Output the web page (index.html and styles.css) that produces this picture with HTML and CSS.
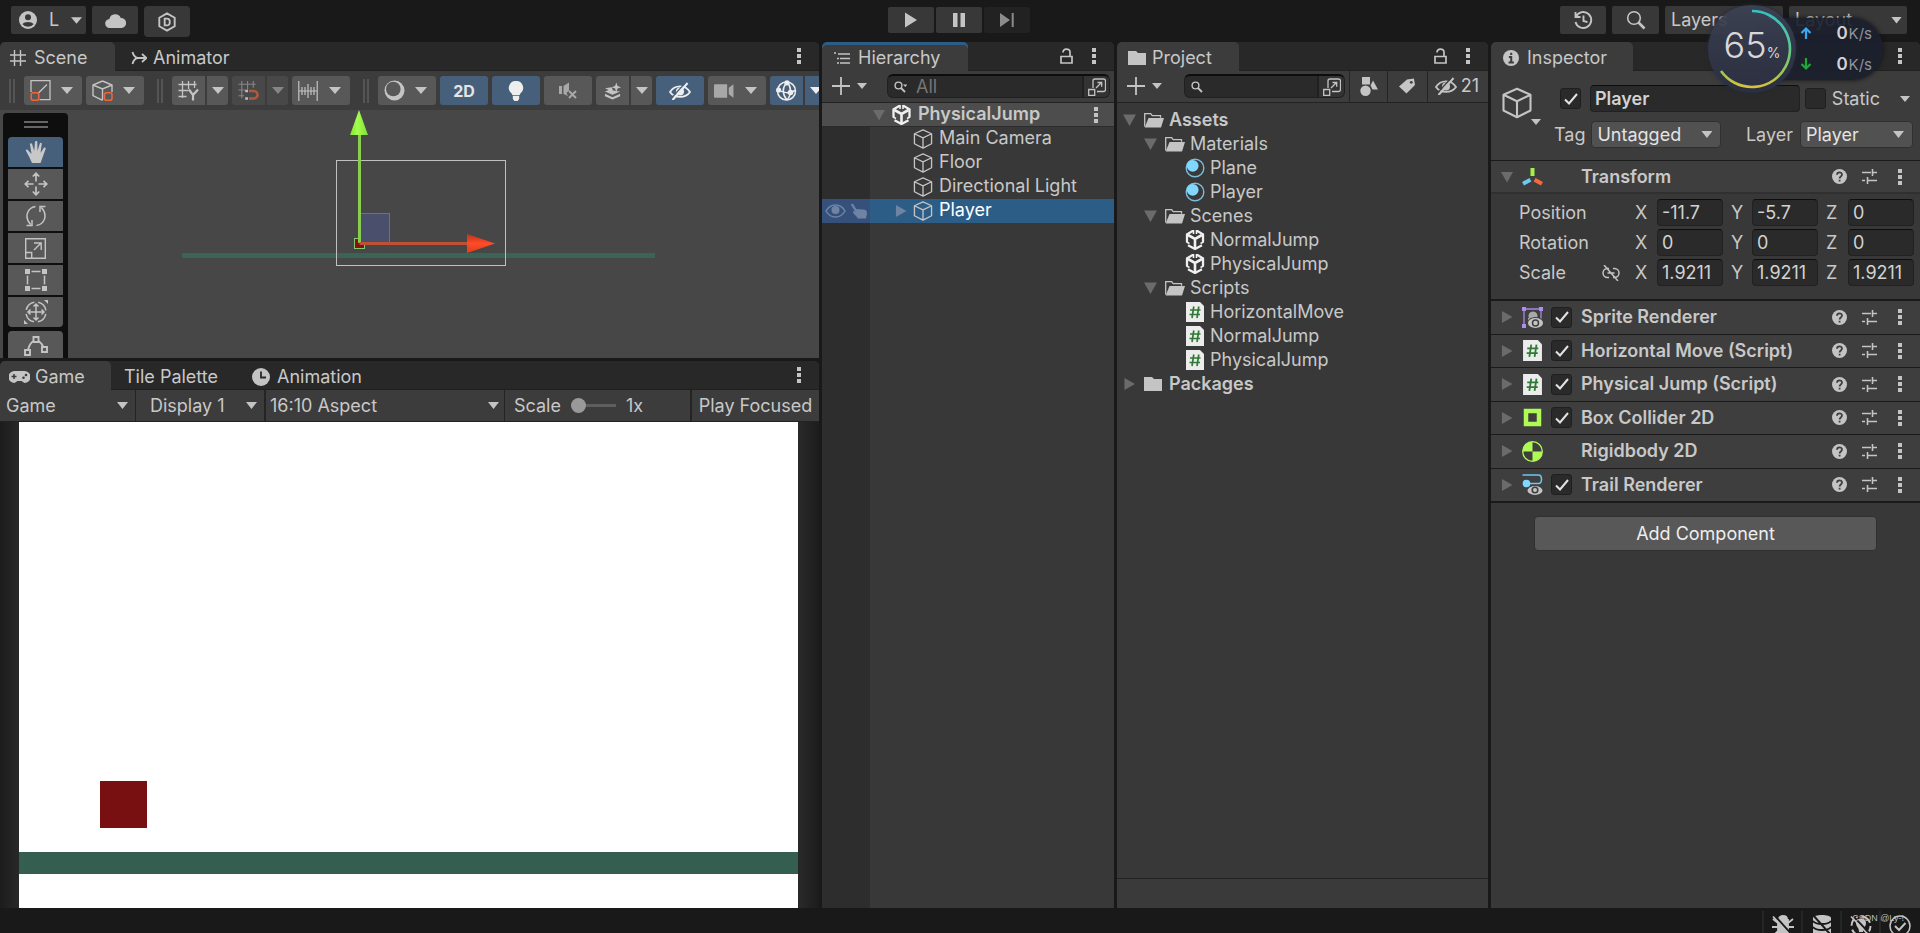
FILE: index.html
```html
<!DOCTYPE html>
<html lang="en">
<head>
<meta charset="utf-8">
<title>PhysicalJump - Editor</title>
<link rel="stylesheet" href="styles.css">
</head>
<body>
<svg class="defs" aria-hidden="true">
  <symbol id="i-user" viewBox="0 0 18 18"><circle cx="9" cy="9" r="9" fill="currentColor"/><circle cx="9" cy="6.2" r="3" fill="#383838"/><path d="M3.500 13.200c1.400-3 9.600-3 11 0a7 7 0 0 1-11 0z" fill="#383838"/></symbol>
  <symbol id="i-cloud" viewBox="0 0 21 15"><path d="M5 15a4.500 4.500 0 0 1-.6-9A6 6 0 0 1 15.800 5 5 5 0 0 1 16.500 15z" fill="currentColor"/></symbol>
  <symbol id="i-hexd" viewBox="0 0 18 19"><path d="M9 1.300l7.300 4.100v8.200L9 17.700l-7.300-4.100V5.400z M6.800 6.300v6.400h2.200a2.600 2.600 0 0 0 2.600-2.600v-1.200A2.600 2.600 0 0 0 9 6.300z" fill="none" stroke="currentColor" stroke-width="1.800"/></symbol>
  <symbol id="i-history" viewBox="0 0 20 20"><path d="M3.200 6.200A8 8 0 1 1 2.500 12M2.500 2v5h5M10.500 5.500v5.500l4 1.200" fill="none" stroke="currentColor" stroke-width="1.900"/></symbol>
  <symbol id="i-search" viewBox="0 0 20 20"><circle cx="8" cy="8" r="6.300" fill="none" stroke="currentColor" stroke-width="1.600"/><path d="M12.500 12.500l6 6" stroke="currentColor" stroke-width="2.600"/></symbol>
  <symbol id="i-play" viewBox="0 0 14 16"><path d="M1 .5l12 7.500-12 7.500z" fill="currentColor"/></symbol>
  <symbol id="i-pause" viewBox="0 0 14 16"><path d="M1 1h4.500v14H1zM8.500 1H13v14H8.500z" fill="currentColor"/></symbol>
  <symbol id="i-step" viewBox="0 0 16 16"><path d="M1 1l10 7-10 7zM12.700 1h2v14h-2z" fill="currentColor"/></symbol>
  <symbol id="i-grid" viewBox="0 0 16 16"><path d="M4.500 0v16M10.500 0v16M0 5h16M0 11h16" stroke="currentColor" stroke-width="1.400"/></symbol>
  <symbol id="i-animator" viewBox="0 0 16 14"><path d="M1.500 1c1 4 3 5.800 6 6M1.500 13c1-4 3-6 6-6H14" fill="none" stroke="currentColor" stroke-width="1.800"/><path d="M11 3l4.500 4-4.500 4" fill="none" stroke="currentColor" stroke-width="1.800"/></symbol>
  <symbol id="i-dots" viewBox="0 0 4 16"><path d="M0 0h4v4H0zM0 6h4v4H0zM0 12h4v4H0z" fill="currentColor"/></symbol>
  <symbol id="i-tri" viewBox="0 0 12 7"><path d="M0 0h12L6 7z" fill="currentColor"/></symbol>
  <symbol id="i-down" viewBox="0 0 13 12"><path d="M0 .5h13L6.500 12z" fill="currentColor"/></symbol>
  <symbol id="i-right" viewBox="0 0 13 13"><path d="M1 0l11.500 6.500L1 13z" fill="currentColor"/></symbol>
  <symbol id="i-pivot" viewBox="0 0 20 21"><path d="M.5 12V.7h19v19H9M8 13l8.500-8.500" fill="none" stroke="currentColor" stroke-width="1.300"/><rect x=".7" y="12.700" width="7.500" height="7.500" rx="2" fill="none" stroke="#f06437" stroke-width="1.600"/></symbol>
  <symbol id="i-cubeo" viewBox="0 0 21 21"><path d="M10.500 1L1 5v10.500l9.500 4.800M10.500 1L20 5v7M1 5l9.500 4L20 5M10.500 9v11" fill="none" stroke="currentColor" stroke-width="1.400"/><rect x="12.500" y="12.700" width="7.500" height="7.500" rx="2" fill="none" stroke="#f06437" stroke-width="1.600"/></symbol>
  <symbol id="i-gridy" viewBox="0 0 20 21"><path d="M4 1v17M10 1v8M16 1v7M0 4.500h18M0 10.500h10M0 16.500h8" fill="none" stroke="currentColor" stroke-width="1.300"/><path d="M10.500 9.500l4 5.500v5.500M19.500 9.500l-5 5.500" fill="none" stroke="currentColor" stroke-width="2.200"/></symbol>
  <symbol id="i-snap" viewBox="0 0 21 22"><path d="M3.500 1v18M9.500 1v9M15.500 1v7M0 4.500h18M0 10.500h7M0 16.500h6" fill="none" stroke="currentColor" stroke-width="1.200"/><path d="M11 11.500h5a4 4 0 0 1 0 8h-5" fill="none" stroke="#b05a3c" stroke-width="2.600"/><path d="M7 10.200h3v2.600H7zM7 18.200h3v2.600H7z" fill="#bbb"/></symbol>
  <symbol id="i-ruler" viewBox="0 0 20 20"><path d="M.8 0v20M19.200 0v20M1 10h18M4 6v8M7 6v8M10 3v14M13 6v8M16 6v8" stroke="currentColor" stroke-width="1.200"/></symbol>
  <symbol id="i-shade" viewBox="0 0 21 21"><circle cx="10.500" cy="10.500" r="10" fill="currentColor"/><circle cx="9.300" cy="9" r="7.300" fill="#585858"/></symbol>
  <symbol id="i-bulb" viewBox="0 0 14 19"><path d="M7 0a6.600 6.600 0 0 1 4 12l-.5 1.200h-7L3 12A6.600 6.600 0 0 1 7 0zM4 14h6v3l-1.500 2h-3L4 17z" fill="currentColor"/></symbol>
  <symbol id="i-mute" viewBox="0 0 18 18"><path d="M0 4h3v8H0zM4.500 4L10 .5v8L7.500 11 9 14l-4.500-2z" fill="currentColor"/><path d="M10 9l7 7M17 9l-7 7" stroke="currentColor" stroke-width="2"/></symbol>
  <symbol id="i-fx" viewBox="0 0 19 18"><path d="M1 6l7-1 1.500 3.500L17 9.500 9 13 1 9.500 5 8z M1 12l8 3.500L17 12v2.500L9 18l-8-3.500zM13 0l1.300 3.700L18 5l-3.700 1.300L13 10l-1.300-3.700L8 5l3.700-1.300z" fill="currentColor"/></symbol>
  <symbol id="i-eyeoff" viewBox="0 0 22 18"><path d="M1 10c4.500-7.500 15.500-7.500 20 0-4.500 6.500-15.500 6.500-20 0z" fill="none" stroke="currentColor" stroke-width="1.800"/><circle cx="11" cy="9.500" r="4" fill="currentColor"/><path d="M3.500 18L18.500 1" stroke="currentColor" stroke-width="2.200"/><path d="M2 16.500L17 0" stroke="var(--bg,#3c3c3c)" stroke-width="1.200"/></symbol>
  <symbol id="i-cam" viewBox="0 0 19 14"><path d="M1 .5h11.500v13H1a1 1 0 0 1-1-1v-11a1 1 0 0 1 1-1zM14 4l4.500-3.500v13L14 10z" fill="currentColor"/></symbol>
  <symbol id="i-gizmo" viewBox="0 0 21 21"><g fill="none" stroke="currentColor" stroke-width="1.500"><circle cx="10.500" cy="11" r="9"/><path d="M11 2C6 8 6 14 11 20M11 2c4.500 5 5 12 0 18M2 9.500c5 4 12 4 17 1"/></g><circle cx="11" cy="2.800" r="2.600" fill="currentColor"/><circle cx="2.600" cy="10" r="2.600" fill="currentColor"/><circle cx="14.500" cy="12.500" r="2.800" fill="currentColor"/></symbol>
  <symbol id="i-hand" viewBox="0 0 21 22"><path d="M6.500 22L4 16.500 .3 9.500C.5 8 2 8.300 2.600 9.300L6 13 4.500 3.500C4.500 1.800 6.300 1.800 6.700 3.300L8.700 10 9.500 1c.3-1.400 2.100-1.400 2.300 0L12 10 14.300 2.500c.5-1.300 2.200-1 2 .6L15 12l3.200-5c.9-1 2.400-.3 1.900 1L16.500 18 15 22z" fill="currentColor"/></symbol>
  <symbol id="i-move" viewBox="0 0 24 24"><g fill="none" stroke="currentColor" stroke-width="1.700"><path d="M12 9.500V1.500M8.800 4.500L12 1.200l3.200 3.300M12 14.500v8M8.800 19.500l3.200 3.300 3.200-3.300M9.500 12h-8M4.500 8.800L1.200 12l3.300 3.200M14.500 12h8M19.500 8.800l3.300 3.200-3.300 3.200"/></g></symbol>
  <symbol id="i-rotate" viewBox="0 0 22 22"><g fill="none" stroke="currentColor" stroke-width="1.500"><path d="M10.500 1.500C3 2.500-1.500 11.500 5.500 19.500M11.500 20.500C19 19.500 23.500 10.500 16.500 2.500M1.500 20.500H7V15M20.500 1.500H15V7"/></g></symbol>
  <symbol id="i-scale" viewBox="0 0 21 21"><path d="M.7.700h19.600v19.600H.7zM.7 14.500h6v6M9 12l6.500-6.500M9 5h7.200v7" fill="none" stroke="currentColor" stroke-width="1.400"/></symbol>
  <symbol id="i-rect" viewBox="0 0 22 22"><path d="M0 0h5v5H0zM17 0h5v5h-5zM0 17h5v5H0zM17 17h5v5h-5z" fill="currentColor"/><path d="M6.500 2.500h9M6.500 19.500h9M2.500 6.500v9M19.500 6.500v9" stroke="currentColor" stroke-width="1.500"/></symbol>
  <symbol id="i-multi" viewBox="0 0 24 24"><g fill="none" stroke="currentColor" stroke-width="1.500"><path d="M12 4v16M4 12h16M9.500 6.500L12 4l2.500 2.500M9.500 17.500L12 20l2.500-2.500M6.500 9.500L4 12l2.500 2.500M17.500 9.500L20 12l-2.500 2.500"/><circle cx="12" cy="12" r="10" stroke-dasharray="11.700 4" stroke-dashoffset="-2"/></g><path d="M20 0h4v4zM0 20v4h4z" fill="currentColor"/></symbol>
  <symbol id="i-path" viewBox="0 0 24 20"><g fill="none" stroke="currentColor" stroke-width="1.900"><path d="M9.500 1h5v5h-5zM1 14h5v5H1zM18 11h5v5h-5z"/><path d="M9.500 5C6 7 5 10 4 14M14.500 5c3 2 4 4 5 6"/></g></symbol>
  <symbol id="i-pad" viewBox="0 0 21 12"><path d="M5.500 0h10a5.500 5.500 0 0 1 0 12L12.500 10h-4L5.500 12a5.500 5.500 0 0 1 0-12z" fill="currentColor"/><path d="M2.500 5.500h5M5 3v5" stroke="#3c3c3c" stroke-width="1.500"/><circle cx="17" cy="4" r="1.300" fill="#3c3c3c"/><circle cx="14.500" cy="6.800" r="1.300" fill="#3c3c3c"/></symbol>
  <symbol id="i-clock" viewBox="0 0 18 18"><circle cx="9" cy="9" r="9" fill="currentColor"/><path d="M9 3.500V9.500h5" fill="none" stroke="#282828" stroke-width="1.800"/></symbol>
  <symbol id="i-list" viewBox="0 0 16 13"><path d="M0 1h2M4 2h12M3 6.500h2M6 6.500h10M3 11h2M6 11h10" stroke="currentColor" stroke-width="1.500"/></symbol>
  <symbol id="i-lock" viewBox="0 0 13 16"><path d="M1 8.500h11v6.500H1zM3 4.500C3 0 10 0 10 4v4.500" fill="none" stroke="currentColor" stroke-width="1.700"/></symbol>
  <symbol id="i-plus" viewBox="0 0 18 18"><path d="M9 0v18M0 9h18" stroke="currentColor" stroke-width="1.800"/></symbol>
  <symbol id="i-mag" viewBox="0 0 13 12"><circle cx="4.500" cy="4.500" r="3.400" fill="none" stroke="currentColor" stroke-width="1.400"/><path d="M7 7l4 4" stroke="currentColor" stroke-width="1.800"/></symbol>
  <symbol id="i-magd" viewBox="0 0 13 12"><circle cx="4.500" cy="4.500" r="3.400" fill="none" stroke="currentColor" stroke-width="1.400"/><path d="M7 7l4 4" stroke="currentColor" stroke-width="1.800"/><path d="M9 3.500h4.500L11.200 6z" fill="currentColor"/></symbol>
  <symbol id="i-expand" viewBox="0 0 18 18"><path d="M5 10V3a2 2 0 0 1 2-2h8.500a2 2 0 0 1 2 2v8.500a2 2 0 0 1-2 2H9M.7 11.500h6v6h-6zM8 10l6-6M9.500 4.500h4.200v4.200" fill="none" stroke="currentColor" stroke-width="1.300"/></symbol>
  <symbol id="i-unity" viewBox="0 0 18 20"><path d="M7.500 .5L1 4.300v7.900M10.500 .5L17 4.300v7.900M2 15.300l7 3.700 7-3.700" fill="none" stroke="#f0f0f0" stroke-width="2.300"/><path d="M2 5l7 4 7-4M9 9v9" fill="none" stroke="#f0f0f0" stroke-width="2.600"/><path d="M7.500 0v4M10.500 0v4M.5 12l3 1.500M17.500 12l-3 1.500" fill="none" stroke="#f0f0f0" stroke-width="1.600"/></symbol>
  <symbol id="i-cube" viewBox="0 0 20 21"><path d="M10 1L1 5v10.500l9 4.500 9-4.500V5zM1 5l9 4.300L19 5M10 9.300V20" fill="none" stroke="currentColor" stroke-width="1.400" stroke-linejoin="round"/></symbol>
  <symbol id="i-eye" viewBox="0 0 21 14"><path d="M1 7c4.500-8 14.500-8 19 0-4.500 8-14.500 8-19 0z" fill="none" stroke="currentColor" stroke-width="1.500"/><circle cx="10.500" cy="6" r="4" fill="currentColor"/></symbol>
  <symbol id="i-point" viewBox="0 0 17 16"><path d="M0 1.500C0-.5 2.500 0 3 1.500L5.500 6l7 .5c3 0 4.500 1 4.500 4 0 2-1 3.500-1 5.500H7c0-2-3.500-4-5-6.500 0-2 2-1.500 3 0z" fill="currentColor"/></symbol>
  <symbol id="i-open" viewBox="0 0 20 15"><path d="M.7 13.500V.7h6l1.500 2h8.300v2" fill="none" stroke="currentColor" stroke-width="1.300"/><path d="M4.500 5H20l-3 9.500H.7z" fill="currentColor"/></symbol>
  <symbol id="i-folder" viewBox="0 0 18 14"><path d="M0 0h8l2 2h8v12H0z" fill="currentColor"/></symbol>
  <symbol id="i-mat" viewBox="0 0 20 20"><circle cx="10" cy="10" r="8.800" fill="none" stroke="#7bbcdc" stroke-width="1.400"/><circle cx="7.700" cy="7.800" r="5.900" fill="#80d8ff"/></symbol>
  <symbol id="i-cs" viewBox="0 0 18 20"><path d="M0 0h14l4 4v16H0z" fill="#ececec"/><path d="M7.800 4.500L6 16M12.800 4.500L11 16M4 8h10.500M3.500 12.500H14" stroke="#2f7a35" stroke-width="1.700"/></symbol>
  <symbol id="i-shapes" viewBox="0 0 18 19"><path d="M2 0h8v7.500H2zM13 3.500l5 9h-5.500l-2-4z" fill="currentColor"/><circle cx="5.500" cy="13.700" r="5.200" fill="currentColor"/></symbol>
  <symbol id="i-tag" viewBox="0 0 15 14"><path d="M0 7.500L7.500 1 14 0l1 6L7 14z" fill="currentColor"/><circle cx="11.500" cy="3.500" r="1.300" fill="#3c3c3c"/></symbol>
  <symbol id="i-info" viewBox="0 0 15 15"><circle cx="7.500" cy="7.500" r="7.500" fill="currentColor"/><path d="M7.700 2.500v2.300M5.500 6.500h2.200v5M5.200 11.700h5" fill="none" stroke="#3c3c3c" stroke-width="1.900"/></symbol>
  <symbol id="i-xform" viewBox="0 0 20 18"><g stroke-width="3.800"><path d="M10 1v7.500" stroke="#a4f04a"/><path d="M8 12l-7 4" stroke="#6cc8f0"/><path d="M12 12l7 4" stroke="#f56a3c"/></g></symbol>
  <symbol id="i-help" viewBox="0 0 15 15"><circle cx="7.500" cy="7.500" r="7.500" fill="currentColor"/><path d="M5 5.800C5 2.600 10 2.600 10 5.600 10 7.500 7.600 7.500 7.600 9.500M7.600 10.800v1.800" fill="none" stroke="#3e3e3e" stroke-width="1.800"/></symbol>
  <symbol id="i-preset" viewBox="0 0 15 15"><path d="M0 3.500h9M10.500 0v7M10.500 3.500H15M0 11.500h3M5.500 8v7M5.500 11.500H15" stroke="currentColor" stroke-width="1.600"/></symbol>
  <symbol id="i-link" viewBox="0 0 18 16"><path d="M7 3.500H5.500a4.500 4.500 0 0 0 0 9H7M11 3.500h1.500a4.500 4.500 0 0 1 0 9H11M5.500 8h7M2 0l14 16" fill="none" stroke="currentColor" stroke-width="1.500"/></symbol>
  <symbol id="i-check" viewBox="0 0 14 12"><path d="M1 6.500l4 4L13 1" fill="none" stroke="currentColor" stroke-width="2"/></symbol>
  <symbol id="i-sprite" viewBox="0 0 21 21"><path d="M2 2h17M2 2v17M19 2v10" fill="none" stroke="#a58ae0" stroke-width="1.300"/><path d="M0 0h4v4H0zM17 0h4v4h-4zM0 17h4v4H0z" fill="#b08cf0"/><path d="M6 16V11h1a4.500 4.500 0 1 1 8 0z" fill="#a8a8a8"/><ellipse cx="13.500" cy="16" rx="8.500" ry="6" fill="#3e3e3e"/><ellipse cx="13.500" cy="16" rx="7.500" ry="5" fill="#c4c4c4"/><circle cx="13.500" cy="16" r="3" fill="none" stroke="#3e3e3e" stroke-width="1.500"/></symbol>
  <symbol id="i-box" viewBox="0 0 21 21"><path d="M4 4h13v13H4z" fill="none" stroke="#b0fa55" stroke-width="4.500"/></symbol>
  <symbol id="i-rigid" viewBox="0 0 21 21"><circle cx="10.500" cy="10.500" r="9.800" fill="none" stroke="#b0fa55" stroke-width="1.300"/><path d="M10.500 10.500V.7a9.800 9.800 0 0 0-9.800 9.800zM10.500 10.500v9.800a9.800 9.800 0 0 0 9.800-9.800z" fill="#b0fa55"/></symbol>
  <symbol id="i-trail" viewBox="0 0 20 21"><path d="M0 1h16c4 0 4 8.500 0 8.500H5" fill="none" stroke="#6cc8f0" stroke-width="1.500"/><circle cx="4" cy="9.500" r="3.800" fill="#80d8ff"/><ellipse cx="12.500" cy="16.500" rx="7.500" ry="4.400" fill="#c4c4c4"/><circle cx="12.500" cy="16" r="2.800" fill="none" stroke="#3e3e3e" stroke-width="1.600"/></symbol>
  <symbol id="i-bug" viewBox="0 0 22 22"><path d="M6 5h10v14l-5 3-5-3zM7 4c0-4 8-4 8 0zM1 4l5 4M21 4l-5 4M0 12h22M2 20l4-4M20 20l-4-4" fill="currentColor" stroke="currentColor" stroke-width="1.800"/><path d="M3 1l18 20" stroke="#191919" stroke-width="2"/><path d="M1 1.500l18 20" stroke="currentColor" stroke-width="1.800"/></symbol>
  <symbol id="i-db" viewBox="0 0 20 22"><path d="M1 3c0-4 18-4 18 0v16c0 4-18 4-18 0z" fill="currentColor"/><path d="M1 6c3 4 15 4 18 0M1 12c3 4 15 4 18 0M1 0l17 19" fill="none" stroke="#191919" stroke-width="2"/></symbol>
  <symbol id="i-lamp" viewBox="0 0 22 22"><circle cx="11" cy="11" r="9.500" fill="none" stroke="currentColor" stroke-width="2" stroke-dasharray="11 4"/><path d="M6 8c0-6 10-6 10 0 0 4-3 4-3 9H9c0-5-3-5-3-9z" fill="currentColor"/><path d="M3 1l18 19" stroke="#191919" stroke-width="2"/><path d="M1 1.500l18 19" stroke="currentColor" stroke-width="1.600"/></symbol>
  <symbol id="i-ok" viewBox="0 0 22 22"><circle cx="11" cy="11" r="10" fill="none" stroke="currentColor" stroke-width="1.500"/><path d="M6 11l4 4 6.500-7" fill="none" stroke="currentColor" stroke-width="2"/></symbol>
</svg>

<div class="app">
  <header class="topbar">
    <div class="top-left">
      <button class="top-btn account" aria-label="Account"><svg class="s18"><use href="#i-user"/></svg><span>L</span><svg class="tri"><use href="#i-tri"/></svg></button>
      <button class="top-btn" aria-label="Cloud"><svg class="w21 h15"><use href="#i-cloud"/></svg></button>
      <button class="top-btn tall" aria-label="DevOps"><svg class="s20"><use href="#i-hexd"/></svg></button>
    </div>
    <div class="transport">
      <button class="top-btn" aria-label="Play"><svg class="s16"><use href="#i-play"/></svg></button>
      <button class="top-btn" aria-label="Pause"><svg class="s16"><use href="#i-pause"/></svg></button>
      <button class="top-btn off" aria-label="Step"><svg class="s16"><use href="#i-step"/></svg></button>
    </div>
    <div class="top-right">
      <button class="top-btn" aria-label="History"><svg class="s20"><use href="#i-history"/></svg></button>
      <button class="top-btn seek" aria-label="Search"><svg class="s20"><use href="#i-search"/></svg></button>
      <div class="drop top-drop"><select aria-label="Layers"><option>Layers</option></select></div>
      <div class="drop top-drop"><select aria-label="Layout"><option>Layout</option></select></div>
    </div>
    <div class="meter">
      <div class="rates">
        <div class="rate"><svg class="s12 up" viewBox="0 0 12 12"><path d="M6 12V2M1.500 6L6 1.500 10.500 6" fill="none" stroke="currentColor" stroke-width="2.200"/></svg><span><b>0</b>K/s</span></div>
        <div class="rate"><svg class="s12 dn" viewBox="0 0 12 12"><path d="M6 0v10M1.500 6L6 10.500 10.500 6" fill="none" stroke="currentColor" stroke-width="2.200"/></svg><span><b>0</b>K/s</span></div>
      </div>
      <div class="dial">
        <svg class="arc" viewBox="0 0 88 88"><defs><linearGradient id="arcg" x1="0" y1="0" x2="0" y2="1"><stop offset="0" stop-color="#35c0c4"/><stop offset=".5" stop-color="#62c890"/><stop offset=".8" stop-color="#9cc850"/><stop offset="1" stop-color="#d8c040"/></linearGradient></defs><path d="M44 6A38 38 0 1 1 13 66" fill="none" stroke="url(#arcg)" stroke-width="2.600"/></svg>
        <span class="pct">65<small>%</small></span>
      </div>
    </div>
  </header>

  <main class="docks">
    <div class="left">
      <section class="pane scene-pane">
        <div class="tabs">
          <button class="tab on tab-scene"><svg class="s16"><use href="#i-grid"/></svg>Scene</button>
          <button class="tab tab-anim"><svg class="s16"><use href="#i-animator"/></svg>Animator</button>
          <button class="more" aria-label="Scene menu"><svg class="dots"><use href="#i-dots"/></svg></button>
        </div>
        <div class="tools">
          <i class="grip"></i>
          <button class="tb wide" aria-label="Pivot"><svg class="s21"><use href="#i-pivot"/></svg><svg class="tri"><use href="#i-tri"/></svg></button>
          <button class="tb wide" aria-label="Local"><svg class="s21"><use href="#i-cubeo"/></svg><svg class="tri"><use href="#i-tri"/></svg></button>
          <i class="grip"></i>
          <div class="split"><button class="tb" aria-label="Grid"><svg class="s21"><use href="#i-gridy"/></svg></button><button class="tb" aria-label="Grid options"><svg class="tri"><use href="#i-tri"/></svg></button></div>
          <div class="split dim"><button class="tb" disabled aria-label="Snap"><svg class="s21"><use href="#i-snap"/></svg></button><button class="tb" disabled aria-label="Snap options"><svg class="tri"><use href="#i-tri"/></svg></button></div>
          <button class="tb wide" aria-label="Increment"><svg class="s20"><use href="#i-ruler"/></svg><svg class="tri"><use href="#i-tri"/></svg></button>
          <i class="grip"></i>
          <button class="tb wide" aria-label="Draw mode"><svg class="s21"><use href="#i-shade"/></svg><svg class="tri"><use href="#i-tri"/></svg></button>
          <button class="tb mid blue two">2D</button>
          <button class="tb mid blue" aria-label="Lighting"><svg class="s20"><use href="#i-bulb"/></svg></button>
          <button class="tb mid grey" aria-label="Audio"><svg class="s18"><use href="#i-mute"/></svg></button>
          <div class="split"><button class="tb" aria-label="Effects"><svg class="s18"><use href="#i-fx"/></svg></button><button class="tb" aria-label="Effects options"><svg class="tri"><use href="#i-tri"/></svg></button></div>
          <button class="tb mid blue eye" aria-label="Visibility"><svg class="w22 h18"><use href="#i-eyeoff"/></svg></button>
          <button class="tb wide grey" aria-label="Camera"><svg class="s20"><use href="#i-cam"/></svg><svg class="tri"><use href="#i-tri"/></svg></button>
          <div class="split"><button class="tb blue" aria-label="Gizmos"><svg class="s21"><use href="#i-gizmo"/></svg></button><button class="tb blue" aria-label="Gizmo options"><svg class="tri"><use href="#i-tri"/></svg></button></div>
        </div>
        <div class="scene">
          <svg class="world" aria-hidden="true">
            <defs><linearGradient id="cg"><stop offset="0" stop-color="#7fe032"/><stop offset=".4" stop-color="#a6ff4c"/><stop offset="1" stop-color="#7ede38"/></linearGradient><linearGradient id="cr" x2="0" y2="1"><stop offset="0" stop-color="#c03218"/><stop offset=".5" stop-color="#ff4c28"/><stop offset="1" stop-color="#e03c1c"/></linearGradient></defs>
            <rect x="182" y="143" width="473" height="5" fill="#3a6455"/>
            <rect x="336.500" y="50.500" width="169" height="105" fill="none" stroke="#c0c0c0"/>
            <rect x="354.500" y="128.500" width="10" height="10" fill="#871010" stroke="#86c878"/>
            <rect x="360.500" y="103.500" width="29" height="30" fill="#4a506b" stroke="#4c74cc"/>
            <path d="M359.500 24v109" stroke="#8ace4e" stroke-width="3"/>
            <path d="M359.500 133.500H468" stroke="#c05034" stroke-width="3"/>
            <path d="M359 0l9 25h-18z" fill="url(#cg)"/>
            <path d="M467 124l28 9.500-28 9.500z" fill="url(#cr)"/>
          </svg>
          <div class="palette">
            <i class="pgrip"></i>
            <button class="tb blue" aria-label="Hand"><svg class="s22"><use href="#i-hand"/></svg></button>
            <button class="tb" aria-label="Move"><svg class="s24"><use href="#i-move"/></svg></button>
            <button class="tb" aria-label="Rotate"><svg class="s22"><use href="#i-rotate"/></svg></button>
            <button class="tb" aria-label="Scale"><svg class="s21"><use href="#i-scale"/></svg></button>
            <button class="tb" aria-label="Rect"><svg class="s22"><use href="#i-rect"/></svg></button>
            <button class="tb last" aria-label="Transform"><svg class="s24"><use href="#i-multi"/></svg></button>
            <button class="tb extra" aria-label="Edit collider"><svg class="s24"><use href="#i-path"/></svg></button>
          </div>
        </div>
      </section>

      <section class="pane game-pane">
        <div class="tabs">
          <button class="tab on tab-game"><svg class="w21 h12"><use href="#i-pad"/></svg>Game</button>
          <button class="tab tab-tile">Tile Palette</button>
          <button class="tab tab-ani"><svg class="s18"><use href="#i-clock"/></svg>Animation</button>
          <button class="more" aria-label="Game menu"><svg class="dots"><use href="#i-dots"/></svg></button>
        </div>
        <div class="gbar">
          <div class="drop g1"><select aria-label="View"><option>Game</option></select></div>
          <div class="drop g2"><select aria-label="Display"><option>Display 1</option></select></div>
          <div class="drop g3"><select aria-label="Aspect"><option>16:10 Aspect</option></select></div>
          <label class="g4">Scale<input type="range" min="1" max="5" value="1"><span>1x</span></label>
          <button class="g5">Play Focused</button>
        </div>
        <div class="gview">
          <div class="stage">
            <div class="player"></div>
            <div class="floor"></div>
          </div>
        </div>
      </section>
    </div>

    <section class="pane hier">
      <div class="tabs">
        <button class="tab on focus tab-hier"><svg class="w16 h13"><use href="#i-list"/></svg>Hierarchy</button>
        <span class="grow"></span>
        <button class="lock" aria-label="Lock"><svg class="w13 h16"><use href="#i-lock"/></svg></button>
        <button class="more" aria-label="Hierarchy menu"><svg class="dots"><use href="#i-dots"/></svg></button>
      </div>
      <div class="bar">
        <button class="add" aria-label="Create"><svg class="s18"><use href="#i-plus"/></svg><svg class="tri sm"><use href="#i-tri"/></svg></button>
        <div class="find"><label><svg class="w13 h12"><use href="#i-magd"/></svg><input type="text" aria-label="Search hierarchy" placeholder="All"></label><button aria-label="Open search"><svg class="s18"><use href="#i-expand"/></svg></button></div>
      </div>
      <div class="scene-head"><svg class="fold"><use href="#i-down"/></svg><svg class="w19 h20"><use href="#i-unity"/></svg><b>PhysicalJump</b><svg class="dots"><use href="#i-dots"/></svg></div>
      <ul class="objects">
        <li><span class="gut"></span><svg class="s20"><use href="#i-cube"/></svg><span class="nm">Main Camera</span></li>
        <li><span class="gut"></span><svg class="s20"><use href="#i-cube"/></svg><span class="nm">Floor</span></li>
        <li><span class="gut"></span><svg class="s20"><use href="#i-cube"/></svg><span class="nm">Directional Light</span></li>
        <li class="sel"><span class="gut"><svg class="w21 h14"><use href="#i-eye"/></svg><svg class="s16"><use href="#i-point"/></svg></span><svg class="fold"><use href="#i-right"/></svg><svg class="s20"><use href="#i-cube"/></svg><span class="nm">Player</span></li>
        <li class="rest"><span class="gut"></span></li>
      </ul>
    </section>

    <section class="pane proj">
      <div class="tabs">
        <button class="tab on tab-proj"><svg class="w18 h14"><use href="#i-folder"/></svg>Project</button>
        <span class="grow"></span>
        <button class="lock" aria-label="Lock"><svg class="w13 h16"><use href="#i-lock"/></svg></button>
        <button class="more" aria-label="Project menu"><svg class="dots"><use href="#i-dots"/></svg></button>
      </div>
      <div class="bar">
        <button class="add" aria-label="Create"><svg class="s18"><use href="#i-plus"/></svg><svg class="tri sm"><use href="#i-tri"/></svg></button>
        <div class="find"><label><svg class="w13 h12"><use href="#i-mag"/></svg><input type="text" aria-label="Search project"></label><button aria-label="Open search"><svg class="s18"><use href="#i-expand"/></svg></button></div>
        <button class="filt kind" aria-label="Search by type"><svg class="w18 h19"><use href="#i-shapes"/></svg></button>
        <button class="filt" aria-label="Search by label"><svg class="s16"><use href="#i-tag"/></svg></button>
        <button class="filt hid"><svg class="w22 h18"><use href="#i-eyeoff"/></svg>21</button>
      </div>
      <ul class="tree">
        <li><svg class="fold"><use href="#i-down"/></svg><svg class="w20 h15"><use href="#i-open"/></svg><b>Assets</b></li>
        <li class="l2"><svg class="fold"><use href="#i-down"/></svg><svg class="w20 h15"><use href="#i-open"/></svg>Materials</li>
        <li class="l3"><svg class="s20"><use href="#i-mat"/></svg>Plane</li>
        <li class="l3"><svg class="s20"><use href="#i-mat"/></svg>Player</li>
        <li class="l2"><svg class="fold"><use href="#i-down"/></svg><svg class="w20 h15"><use href="#i-open"/></svg>Scenes</li>
        <li class="l3"><svg class="s20"><use href="#i-unity"/></svg>NormalJump</li>
        <li class="l3"><svg class="s20"><use href="#i-unity"/></svg>PhysicalJump</li>
        <li class="l2"><svg class="fold"><use href="#i-down"/></svg><svg class="w20 h15"><use href="#i-open"/></svg>Scripts</li>
        <li class="l3"><svg class="s20"><use href="#i-cs"/></svg>HorizontalMove</li>
        <li class="l3"><svg class="s20"><use href="#i-cs"/></svg>NormalJump</li>
        <li class="l3"><svg class="s20"><use href="#i-cs"/></svg>PhysicalJump</li>
        <li><svg class="fold"><use href="#i-right"/></svg><svg class="w18 h14 closed"><use href="#i-folder"/></svg><b>Packages</b></li>
      </ul>
      <div class="crumbs"></div>
    </section>

    <section class="pane insp">
      <div class="tabs">
        <button class="tab on tab-insp"><svg class="s16"><use href="#i-info"/></svg>Inspector</button>
        <span class="grow"></span>
        <button class="more" aria-label="Inspector menu"><svg class="dots"><use href="#i-dots"/></svg></button>
      </div>
      <div class="ident">
        <button class="ico" aria-label="Icon"><svg class="big"><use href="#i-cube"/></svg><svg class="tri sm"><use href="#i-tri"/></svg></button>
        <div class="lines">
          <div class="line1">
            <span class="ck"><input type="checkbox" checked aria-label="Active"><svg><use href="#i-check"/></svg></span>
            <input class="field name" type="text" value="Player" aria-label="Name">
            <label class="static"><span class="ck"><input type="checkbox"></span>Static</label>
            <svg class="tri sm"><use href="#i-tri"/></svg>
          </div>
          <div class="line2">
            <label for="tag">Tag</label><div class="drop box dtag"><select id="tag"><option>Untagged</option></select></div>
            <label for="layer" class="lay">Layer</label><div class="drop box dlay"><select id="layer"><option>Player</option></select></div>
          </div>
        </div>
      </div>
      <div class="comp thead"><svg class="fold"><use href="#i-down"/></svg><svg class="s21"><use href="#i-xform"/></svg><span class="ck none"></span><b>Transform</b><svg class="s15"><use href="#i-help"/></svg><svg class="s15"><use href="#i-preset"/></svg><svg class="dots"><use href="#i-dots"/></svg></div>
      <div class="xform">
        <div class="vec"><span>Position</span><label>X<input class="field" type="text" value="-11.7"></label><label>Y<input class="field" type="text" value="-5.7"></label><label>Z<input class="field" type="text" value="0"></label></div>
        <div class="vec"><span>Rotation</span><label>X<input class="field" type="text" value="0"></label><label>Y<input class="field" type="text" value="0"></label><label>Z<input class="field" type="text" value="0"></label></div>
        <div class="vec"><span>Scale<svg class="w18 h16"><use href="#i-link"/></svg></span><label>X<input class="field" type="text" value="1.9211"></label><label>Y<input class="field" type="text" value="1.9211"></label><label>Z<input class="field" type="text" value="1.9211"></label></div>
      </div>
      <div class="comps">
        <div class="comp"><svg class="fold"><use href="#i-right"/></svg><svg class="s21"><use href="#i-sprite"/></svg><span class="ck"><input type="checkbox" checked aria-label="Sprite Renderer"><svg><use href="#i-check"/></svg></span><b>Sprite Renderer</b><svg class="s15"><use href="#i-help"/></svg><svg class="s15"><use href="#i-preset"/></svg><svg class="dots"><use href="#i-dots"/></svg></div>
        <div class="comp"><svg class="fold"><use href="#i-right"/></svg><svg class="s21"><use href="#i-cs"/></svg><span class="ck"><input type="checkbox" checked aria-label="Horizontal Move"><svg><use href="#i-check"/></svg></span><b>Horizontal Move (Script)</b><svg class="s15"><use href="#i-help"/></svg><svg class="s15"><use href="#i-preset"/></svg><svg class="dots"><use href="#i-dots"/></svg></div>
        <div class="comp"><svg class="fold"><use href="#i-right"/></svg><svg class="s21"><use href="#i-cs"/></svg><span class="ck"><input type="checkbox" checked aria-label="Physical Jump"><svg><use href="#i-check"/></svg></span><b>Physical Jump (Script)</b><svg class="s15"><use href="#i-help"/></svg><svg class="s15"><use href="#i-preset"/></svg><svg class="dots"><use href="#i-dots"/></svg></div>
        <div class="comp"><svg class="fold"><use href="#i-right"/></svg><svg class="s21"><use href="#i-box"/></svg><span class="ck"><input type="checkbox" checked aria-label="Box Collider 2D"><svg><use href="#i-check"/></svg></span><b>Box Collider 2D</b><svg class="s15"><use href="#i-help"/></svg><svg class="s15"><use href="#i-preset"/></svg><svg class="dots"><use href="#i-dots"/></svg></div>
        <div class="comp"><svg class="fold"><use href="#i-right"/></svg><svg class="s21"><use href="#i-rigid"/></svg><span class="ck none"></span><b>Rigidbody 2D</b><svg class="s15"><use href="#i-help"/></svg><svg class="s15"><use href="#i-preset"/></svg><svg class="dots"><use href="#i-dots"/></svg></div>
        <div class="comp"><svg class="fold"><use href="#i-right"/></svg><svg class="s21"><use href="#i-trail"/></svg><span class="ck"><input type="checkbox" checked aria-label="Trail Renderer"><svg><use href="#i-check"/></svg></span><b>Trail Renderer</b><svg class="s15"><use href="#i-help"/></svg><svg class="s15"><use href="#i-preset"/></svg><svg class="dots"><use href="#i-dots"/></svg></div>
      </div>
      <button class="addc">Add Component</button>
    </section>
  </main>

  <footer class="status">
    <button aria-label="Debugger"><svg class="s22"><use href="#i-bug"/></svg></button>
    <button aria-label="Cache server"><svg class="s22"><use href="#i-db"/></svg></button>
    <button aria-label="Auto lighting"><svg class="s22"><use href="#i-lamp"/></svg></button>
    <button aria-label="Activity"><svg class="s22"><use href="#i-ok"/></svg></button>
    <span class="mark">CSDN @Ly-!</span>
  </footer>
</div>
</body>
</html>
```
FILE: styles.css
```css
* { box-sizing: border-box; }
body { margin: 0; background: #191919; color: #c8c8c8; font: 18px/24px Inter, "Liberation Sans", sans-serif; font-optical-sizing: none; }
button, input, select { font: inherit; font-optical-sizing: none; color: inherit; border: 0; margin: 0; padding: 0; background: none; border-radius: 0; }
button { display: flex; align-items: center; justify-content: center; white-space: nowrap; }
select { appearance: none; cursor: pointer; }
ul { list-style: none; margin: 0; padding: 0; }
b { font-weight: 600; }
svg { flex: none; display: block; overflow: visible; color: #c4c4c4; }
.defs { position: absolute; width: 0; height: 0; }
.s12 { width: 12px; height: 12px; } .s15 { width: 15px; height: 15px; } .s16 { width: 16px; height: 16px; }
.s18 { width: 18px; height: 18px; } .s20 { width: 20px; height: 20px; } .s21 { width: 21px; height: 21px; }
.s22 { width: 22px; height: 22px; } .s24 { width: 24px; height: 24px; }
.w13 { width: 13px; } .w16 { width: 16px; } .w18 { width: 18px; } .w19 { width: 19px; } .w20 { width: 20px; } .w21 { width: 21px; } .w22 { width: 22px; }
.h12 { height: 12px; } .h13 { height: 13px; } .h14 { height: 14px; } .h15 { height: 15px; } .h16 { height: 16px; } .h18 { height: 18px; } .h19 { height: 19px; } .h20 { height: 20px; }
.dots { width: 4px; height: 16px; }
.tri { width: 12px; height: 7px; }
.tri.sm { width: 10px; height: 6px; }
.fold { width: 12px; height: 12px; color: #6b6b6b; }
.grow { flex: 1; }

.app { display: grid; grid-template-rows: 42px minmax(0, 1fr) 25px; height: 100vh; overflow: hidden; }

/* top bar */
.topbar { position: relative; display: grid; grid-template-columns: 1fr auto 1fr; align-items: start; padding: 6px 13px 0 11px; }
.top-left, .top-right, .transport { display: flex; gap: 6px; }
.top-right { justify-content: flex-end; }
.transport { gap: 2px; padding-top: 1px; }
.top-btn { width: 46px; height: 28px; background: #383838; border-radius: 2px; }
.top-btn.seek { width: 47px; }
.transport .top-btn { height: 26px; }
.top-btn.off { background: #222; }
.top-btn.off svg { color: #8c8c8c; }
.top-btn.tall { height: 31px; border-radius: 4px; }
.account { width: 75px; gap: 12px; justify-content: flex-start; padding-left: 8px; }
.account .tri { width: 11px; }
.drop { display: grid; align-items: center; }
.drop > select { grid-area: 1 / 1; width: 100%; height: 100%; }
.drop::after { content: ""; grid-area: 1 / 1; justify-self: end; width: 11px; height: 7px; margin-right: 5px; background: #c4c4c4; clip-path: polygon(0 0, 100% 0, 50% 100%); pointer-events: none; }
.top-drop { width: 118px; height: 28px; background: #383838; padding: 0 0 0 6px; border-radius: 2px; }

/* network meter floating over the window */
.meter { position: absolute; right: 37px; top: 5px; width: 175px; height: 88px; z-index: 5; display: grid; align-items: center; }
.rates { grid-area: 1 / 1; height: 62px; margin-left: 44px; border-radius: 31px; background: rgba(27, 32, 45, .92); display: grid; grid-template-rows: 30px 32px; padding-left: 48px; box-shadow: 0 0 4px #111; }
.rate { display: flex; align-items: center; justify-content: space-between; padding-right: 11px; font-size: 15px; color: #8e929b; }
.rate b { font-size: 17px; color: #d4d4d8; margin-right: 1px; }
.rate .up { color: #38a8f0; } .rate .dn { color: #1ea838; }
.dial { grid-area: 1 / 1; width: 88px; height: 88px; border-radius: 50%; background: linear-gradient(rgba(60, 66, 84, .92), rgba(42, 46, 64, .96)); display: grid; place-items: center; box-shadow: 0 0 4px #222838; }
.arc { grid-area: 1 / 1; width: 88px; height: 88px; }
.pct { grid-area: 1 / 1; font: 300 36px/40px Inter, sans-serif; color: #d8d8dc; }
.pct small { font-size: 14px; font-weight: 400; }

/* docks */
.docks { display: grid; grid-template-columns: 819fr 292fr 371fr 429fr; gap: 3px; min-height: 0; }
.left { display: grid; grid-template-rows: 316px minmax(0, 1fr); gap: 3px; min-width: 0; min-height: 0; }
.pane { display: flex; flex-direction: column; background: #383838; min-width: 0; min-height: 0; overflow: hidden; border-radius: 5px 5px 0 0; }
.tabs { flex: none; display: flex; height: 29px; background: #282828; box-shadow: inset 0 -1px #202020; }
.tab { height: 29px; justify-content: flex-start; gap: 8px; padding-top: 3px; }
.tab.on { background: #3c3c3c; border-radius: 5px 5px 0 0; }
.tab.focus { box-shadow: inset 0 3px #2c5d87; }
.tab-scene { width: 115px; padding-left: 10px; }
.tab-anim { padding-left: 16px; gap: 6px; }
.tab-game { width: 111px; padding-left: 9px; gap: 5px; }
.tab-tile { padding-left: 13px; }
.tab-ani { padding-left: 34px; gap: 7px; }
.tab-hier { width: 146px; padding-left: 12px; }
.tab-proj { width: 122px; padding-left: 11px; gap: 6px; }
.tab-insp { width: 142px; padding-left: 12px; }
.more { width: 4px; margin: 0 18px 2px auto; }
.lock { margin: 0 19px 2px 0; }
.lock + .more, .grow + .more { margin-left: 0; }

.tools { flex: none; display: flex; align-items: center; gap: 4px; height: 39px; padding-left: 9px; background: #3c3c3c; overflow: hidden; }
.grip { flex: none; width: 6px; height: 24px; margin: 0 5px 0 9px; border: solid #555; border-width: 0 2px; }
.grip:first-child { margin-left: 0; }
.tb { flex: none; height: 29px; background: #585858; border-radius: 3px; }
.tb.wide { width: 58px; justify-content: space-between; padding: 0 9px 0 6px; }
.tb.mid { width: 48px; }
.tb.blue { background: #46607c; }
.blue svg { color: #eee; }
.eye { --bg: #46607c; }
.two { font-weight: 700; font-size: 16px; color: #e4e4e4; }
.grey svg:first-child { color: #a8a8a8; }
.split { flex: none; display: flex; gap: 2px; }
.split .tb { width: 33px; border-radius: 3px 0 0 3px; }
.split .tb + .tb { width: 21px; border-radius: 0 3px 3px 0; }
.dim .tb { background: #484848; }
.dim svg { color: #858585; }

.scene { position: relative; flex: 1; background: #474747; overflow: hidden; }
.world { width: 100%; height: 100%; }
.palette { position: absolute; left: 3px; top: 3px; width: 65px; padding: 8px 5px 5px; background: #0e0e0e; border-radius: 4px; display: flex; flex-direction: column; gap: 2px; }
.palette .tb { height: 30px; border-radius: 0; }
.palette .tb.blue { border-radius: 4px 4px 0 0; }
.palette .blue svg { color: #c8c8c8; }
.palette .tb.last { border-radius: 0 0 4px 4px; }
.palette .tb.extra { border-radius: 4px 4px 0 0; margin-top: 2px; }
.pgrip { width: 24px; height: 7px; margin: 0 auto 7px; border: solid #666; border-width: 2px 0; }

.gbar { flex: none; display: flex; height: 32px; background: #3c3c3c; border-bottom: 1px solid #222; }
.gbar > * { border-right: 1px solid #242424; }
.gbar .drop { padding-right: 2px; }
.gbar .g1 { width: 136px; padding-left: 6px; }
.gbar .g2 { width: 130px; padding-left: 14px; border-right-width: 2px; }
.gbar .g3 { width: 239px; padding-left: 4px; padding-right: 0; }
.gbar .g4 { width: 187px; padding-left: 9px; display: flex; align-items: center; gap: 10px; border-right-width: 2px; }
.gbar .g5 { flex: 1; border-right: 0; }
.g4 input { appearance: none; width: 45px; height: 15px; background: linear-gradient(#5e5e5e, #5e5e5e) 0 6px / 100% 3px no-repeat; }
.g4 input::-webkit-slider-thumb { appearance: none; width: 15px; height: 15px; border-radius: 50%; background: #999; }
.gview { flex: 1; display: flex; padding: 0 21px 0 19px; background: linear-gradient(90deg, #1c1c1c, #282828 19px, #282828 calc(100% - 18px), #1c1c1c); min-height: 0; }
.stage { flex: 1; background: #fff; display: grid; grid-template-rows: 1fr 24px 22px 34px; }
.player { width: 47px; height: 47px; margin-left: 81px; align-self: end; background: #780f10; }
.floor { grid-row: 3; background: #345e4f; }

/* hierarchy */
.bar { flex: none; display: flex; align-items: center; height: 32px; background: #3c3c3c; border-bottom: 1px solid #222; padding: 0 4px 1px 10px; }
.add { gap: 7px; margin-right: 20px; }
.find { flex: 1; min-width: 0; display: flex; height: 24px; background: #2a2a2a; border: 1px solid #202020; border-top: 2px solid #0d0d0d; border-radius: 6px; }
.find label { flex: 1; min-width: 0; display: flex; align-items: center; padding-left: 6px; gap: 9px; }
.find input { flex: 1; min-width: 0; width: 0; }
.find input::placeholder { color: #757575; opacity: 1; }
.find button { width: 27px; background: #333; border-left: 2px solid #202020; border-radius: 0 5px 5px 0; }
.scene-head { flex: none; display: flex; align-items: center; gap: 7px; height: 24px; padding: 0 16px 0 51px; background: #4d4d4d; border-bottom: 1px solid #2c2c2c; }
.scene-head b { padding-bottom: 2px; }
.scene-head .dots { margin-left: auto; }
.objects { flex: 1; display: flex; flex-direction: column; min-height: 0; }
.objects li { display: flex; align-items: center; height: 24px; gap: 6px; padding-right: 4px; white-space: nowrap; }
.nm { padding-bottom: 2px; }
.objects .rest { flex: 1; }
.gut { flex: none; width: 48px; height: 100%; background: #2d2d2d; margin-right: 37px; display: flex; align-items: center; justify-content: center; gap: 5px; }
.sel { background: #2c5d87; color: #fff; }
.sel .gut { background: #36507c; margin-right: 19px; }
.sel .gut svg, .sel .fold { color: #6f83a2; }

/* project */
.proj .add { margin-right: 22px; }
.proj .bar { padding-right: 0; }
.filt { height: 31px; width: 40px; padding-right: 2px; border-left: 1px solid #242424; }
.filt.kind { margin-left: 4px; width: 38px; padding-right: 0; }
.filt.hid { width: 61px; gap: 4px; }
.tree { flex: 1; padding-top: 5px; }
.tree li { display: flex; align-items: center; height: 24px; padding-left: 6px; gap: 5px; white-space: nowrap; }
.tree .fold { width: 13px; margin-right: 3px; }
.tree .l2 { padding-left: 27px; }
.tree .l3 { padding-left: 68px; }
.closed { margin-right: 2px; }
.crumbs { flex: none; height: 30px; background: #3a3a3a; border-top: 1px solid #222; }

/* inspector */
.ident { flex: none; display: flex; height: 89px; padding: 14px 7px 0 11px; background: #3c3c3c; }
.ico { flex-direction: column; width: 42px; height: 42px; align-items: flex-start; }
.ico .big { width: 30px; height: 32px; }
.ico .tri { margin-left: 29px; }
.lines { flex: 1; min-width: 0; display: grid; grid-template-columns: minmax(0, 1fr); align-content: start; gap: 9px; }
.line1, .line2 { display: flex; align-items: center; height: 27px; }
.line1 { padding-left: 16px; }
.line2 { padding-left: 10px; }
.ck { flex: none; display: inline-grid; place-items: center; width: 21px; height: 21px; }
.ck input { appearance: none; grid-area: 1 / 1; width: 21px; height: 21px; background: #2a2a2a; border: 1px solid #1f1f1f; border-radius: 3px; }
.ck svg { grid-area: 1 / 1; width: 14px; height: 12px; color: #e4e4e4; pointer-events: none; }
.field { width: 100%; min-width: 0; height: 27px; background: #2a2a2a; border: 1px solid #212121; border-top-color: #0d0d0d; border-radius: 4px; padding: 0 4px; color: #d2d2d2; }
.name { flex: 1; margin: 0 5px 0 9px; font-weight: 600; }
.static { display: flex; align-items: center; gap: 6px; }
.line1 > .tri { margin: 0 3px 0 20px; }
.drop.box { height: 27px; background: #515151; border: 1px solid #303030; border-radius: 4px; padding: 0 3px 0 5px; color: #e4e4e4; }
.dtag { width: 130px; margin-left: 6px; }
.dlay { width: 113px; margin-left: 7px; }
.lay { margin-left: auto; }
.comp { display: flex; align-items: center; background: #3e3e3e; border-top: 1px solid #1a1a1a; padding: 0 18px 0 10px; }
.comp .fold { margin-right: 9px; }
.comp .ck { margin: 0 9px 0 8px; }
.comp b { flex: 1; white-space: nowrap; }
.comp .s15 + .s15 { margin: 0 21px 0 15px; }
.thead { flex: none; height: 34px; border-bottom: 2px solid #303030; }
.xform { display: grid; gap: 3px; padding: 5px 6px 13px 28px; }
.vec { display: grid; grid-template-columns: minmax(0, 1fr) 88px 87px 88px; gap: 8px; }
.vec span { display: flex; align-items: center; justify-content: space-between; }
.vec span svg { margin-right: 7px; }
.vec label { display: grid; grid-template-columns: 1fr 66px; align-items: center; }
.comps { display: grid; grid-template-rows: repeat(6, 1fr); height: 204px; border-top: 1px solid #1a1a1a; border-bottom: 2px solid #1a1a1a; }
.addc { align-self: center; width: 80%; height: 35px; margin-top: 13px; background: #585858; border: 1px solid #303030; border-radius: 4px; color: #eee; }

/* status bar */
.status { position: relative; display: flex; justify-content: flex-end; overflow: hidden; padding-right: 2px; }
.status button { width: 39px; height: 30px; margin-top: 3px; border-left: 2px solid #262626; align-items: flex-start; padding-top: 4px; }
.mark { position: absolute; right: 16px; top: 4px; font: 9px/12px "Liberation Sans", Arial, sans-serif; color: #bbb; }
```
